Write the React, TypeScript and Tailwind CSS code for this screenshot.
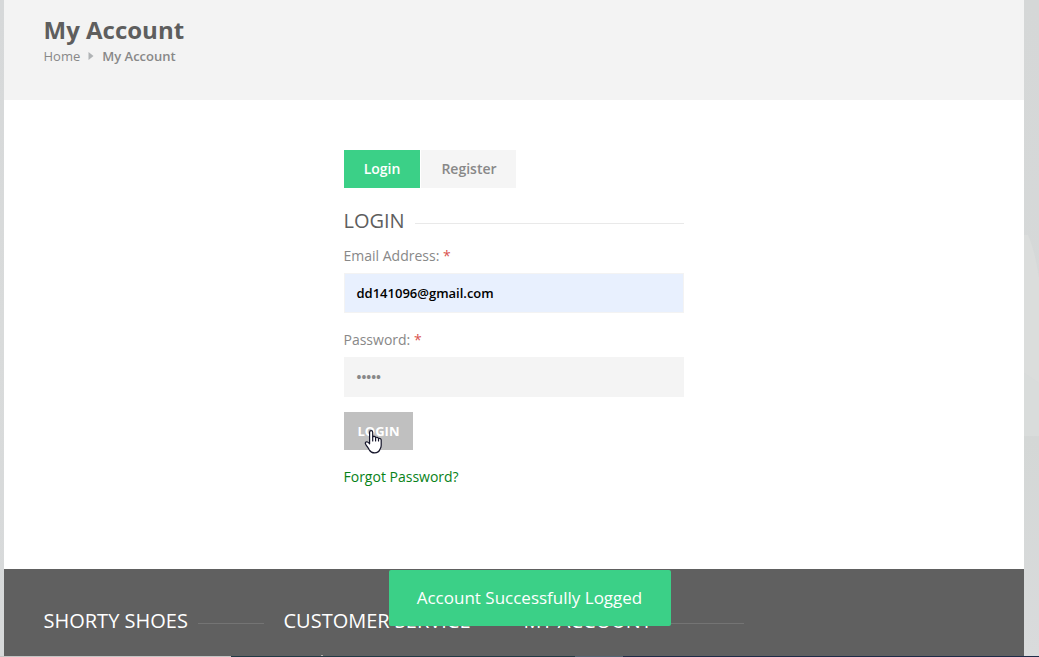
import React from "react";

function SectionTitle({ children, line }: { children: React.ReactNode; line: string }) {
  return (
    <h3 className="flex h-[28px] items-center whitespace-nowrap text-[20px] leading-[28px]">
      <span className="-ml-[0.5px]">{children}</span>
      <span className={`ml-[10.5px] mt-[4px] h-px flex-1 ${line}`} />
    </h3>
  );
}

function HandCursor() {
  return (
    <svg
      className="absolute left-[20px] top-[17px]"
      width="20"
      height="26"
      viewBox="0 0 20 26"
      fill="#fff"
      stroke="#15152a"
      strokeWidth="1.2"
      strokeLinejoin="round"
      strokeLinecap="round"
    >
      <path d="M5.6 14.8V3.2c0-2.2 3.1-2.2 3.1 0v4.9c.4-1.1 2.8-1 2.9.7.6-.9 2.8-.7 2.9 1 .7-.8 2.7-.5 2.7 1.3v5.1c0 2.2-.6 2.8-1.1 3.8-.9 2.6-2.6 3.9-5.5 3.9-2.6 0-4.1-.8-5.2-2.8-.8-1.6-2.1-3.3-3.2-5-.5-.9-1.3-1.8-.8-2.6 1-1.4 3-.3 4.2 1.3z" />
      <path d="M8.7 8v4M11.6 8.8V12M14.5 9.8V12" fill="none" />
    </svg>
  );
}

export default function App() {
  return (
    <div className="relative flex h-[657px] w-[1039px] flex-col overflow-hidden bg-[#d8dada] font-['Open_Sans',sans-serif] text-[14px] text-[#888]">
      <div className="flex min-h-0 flex-1">
        <div className="w-[4px] bg-linear-to-b from-[#d6d8d9] via-[#d9dbdb] to-[#d7d9da]" />
        <div className="flex w-[1020px] flex-col bg-white">
          <header className="h-[100px] bg-[#f3f3f3] pl-[39.5px] pt-[14px]">
            <h1 className="text-[24px] font-bold leading-[31px] text-[#5e5e5e]">My Account</h1>
            <nav className="mt-px flex items-center text-[13px] leading-[20px]">
              <span>Home</span>
              <svg className="ml-[8px] mr-[8px]" width="6" height="8" viewBox="0 0 6 8" fill="#b0b3b5">
                <path d="M.5 0L5.5 4L.5 8Z" />
              </svg>
              <span className="font-semibold">My Account</span>
            </nav>
          </header>

          <main className="h-[469px] pl-[340px] pt-[50px]">
            <div className="w-[340px]">
              <div className="flex h-[38px] gap-px text-[14px] font-semibold">
                <button className="w-[76px] bg-[#3bd087] pb-[2px] text-white">Login</button>
                <button className="w-[95px] bg-[#f5f5f5] pb-[2px] pl-[1px]">Register</button>
              </div>
              <div className="mt-[19px] text-[#5e5e5e]">
                <SectionTitle line="bg-[#e9e9e9]">LOGIN</SectionTitle>
              </div>
              <label className="-ml-[0.5px] mt-[11px] block h-[20px] leading-[20px]">
                Email Address: <span className="text-[#d9534f]">*</span>
              </label>
              <div className="mt-[7px] flex h-[40px] items-center border border-[#f3f3f3] bg-[#e8f0fe] pl-[11.5px] pt-[2px] text-[13px] font-semibold text-black">
                dd141096@gmail.com
              </div>
              <label className="-ml-[0.5px] mt-[17px] block h-[20px] leading-[20px]">
                Password: <span className="text-[#d9534f]">*</span>
              </label>
              <div className="mt-[7px] flex h-[40px] items-center bg-[#f4f4f4] pl-[12.5px] pt-[2px] text-[13px] font-bold">
                •••••
              </div>
              <div className="relative mt-[15px] h-[38px] w-[69px]">
                <button className="h-[38px] w-[69px] bg-[#c0c0c0] pt-[2px] text-[13px] font-bold text-white">LOGIN</button>
                <HandCursor />
              </div>
              <a className="-ml-[0.5px] mt-[17px] block leading-[20px] text-[#078218]">Forgot Password?</a>
            </div>
          </main>

          <footer className="flex flex-1 items-start gap-[20px] bg-[#606060] px-[40px] pt-[38px] text-white">
            <div className="w-[220px]">
              <SectionTitle line="bg-[#747474]">SHORTY SHOES</SectionTitle>
            </div>
            <div className="w-[220px]">
              <SectionTitle line="bg-[#747474]">CUSTOMER SERVICE</SectionTitle>
            </div>
            <div className="w-[220px]">
              <SectionTitle line="bg-[#747474]">MY ACCOUNT</SectionTitle>
            </div>
          </footer>
        </div>
        <svg width="15" height="656" viewBox="0 0 15 656">
          <defs>
            <linearGradient id="backdrop" x2="0" y2="1">
              <stop offset="0" stopColor="#d5d7d7" />
              <stop offset=".6" stopColor="#d6d9d9" />
              <stop offset=".67" stopColor="#d4d7d6" />
              <stop offset="1" stopColor="#d9dbdc" />
            </linearGradient>
          </defs>
          <path fill="url(#backdrop)" d="M0 0H15V656H0z" />
          <path fill="#dbdddc" d="M0 235H4Q11 251 15 278V383L0 373z" />
          <path fill="#d9dcdb" d="M0 373L15 383V436H0z" />
        </svg>
      </div>
      <div className="flex h-px">
        <div className="w-[231px] bg-[#c5c5c5]" />
        <div className="w-[344px] bg-[#213a46]" />
        <div className="w-[48px] bg-[#526575]" />
        <div className="flex-1 bg-[#1d2c49]" />
      </div>
      <div className="absolute left-[389px] top-[570px] flex h-[56px] w-[282px] items-center justify-center rounded-[2px] bg-[#3bd087] pr-px text-[17px] text-white">
        Account Successfully Logged
      </div>
      <div className="absolute left-[321px] top-[655px] h-px w-[2px] bg-[#b5afa9]" />
    </div>
  );
}
